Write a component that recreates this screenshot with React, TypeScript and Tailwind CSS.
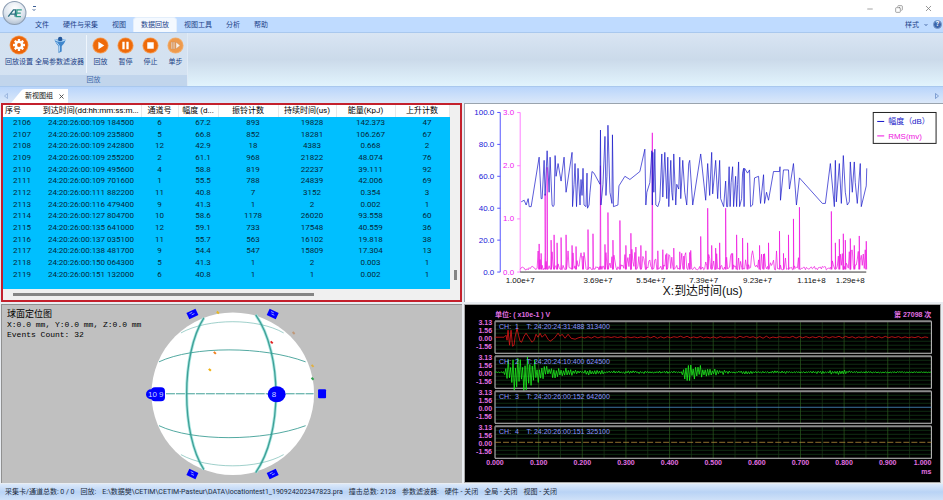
import type { ReactNode } from 'react'
import { ChevronDown, Copy, Minus, X } from 'lucide-react'
import clsx from 'clsx'

const MENU = ['文件', '硬件与采集', '视图', '数据回放', '视图工具', '分析', '帮助']

const COLUMNS = [
  { title: '序号', width: 'w-[38px]' },
  { title: '到达时间(dd:hh:mm:ss:m...', width: 'w-[100px]' },
  { title: '通道号', width: 'w-[37px]' },
  { title: '幅度 (d...', width: 'w-[40px]' },
  { title: '振铃计数', width: 'w-[60px]' },
  { title: '持续时间(us)', width: 'w-[58px]' },
  { title: '能量(KpJ)', width: 'w-[59px]' },
  { title: '上升计数', width: 'w-[54px]' },
]

const HITS = [
  ['2106', '24:20:26:00:109 184500', '6', '67.2', '893', '19828', '142.373', '47'],
  ['2107', '24:20:26:00:109 235800', '5', '66.8', '852', '18281', '106.267', '67'],
  ['2108', '24:20:26:00:109 242800', '12', '42.9', '18', '4383', '0.668', '2'],
  ['2109', '24:20:26:00:109 255200', '2', '61.1', '968', '21822', '48.074', '76'],
  ['2110', '24:20:26:00:109 495600', '4', '58.8', '819', '22237', '39.111', '92'],
  ['2111', '24:20:26:00:109 701600', '1', '55.5', '788', '24839', '42.006', '69'],
  ['2112', '24:20:26:00:111 882200', '11', '40.8', '7', '3152', '0.354', '3'],
  ['2113', '24:20:26:00:116 479400', '9', '41.3', '1', '2', '0.002', '1'],
  ['2114', '24:20:26:00:127 804700', '10', '58.6', '1178', '26020', '93.558', '60'],
  ['2115', '24:20:26:00:135 641000', '12', '59.1', '733', '17548', '40.559', '36'],
  ['2116', '24:20:26:00:137 035100', '11', '55.7', '563', '16102', '19.818', '38'],
  ['2117', '24:20:26:00:138 481700', '9', '54.4', '547', '15809', '17.304', '13'],
  ['2118', '24:20:26:00:150 064300', '5', '41.3', '1', '2', '0.003', '1'],
  ['2119', '24:20:26:00:151 132000', '6', '40.8', '1', '1', '0.002', '1'],
]

// [x, dB]
const AMPLITUDE = [
  [1, 44], [4, 45], [6, 42], [8, 46], [9, 41], [11, 41], [19, 72], [21, 46], [22, 46], [24, 70], [25, 48],
  [27, 76], [29, 50], [30, 72], [32, 42], [33, 41], [34, 42], [35, 73], [36, 60], [38, 68], [41, 57], [44, 72],
  [46, 50], [52, 75], [52.5, 41], [54, 55], [55, 68], [56.5, 41], [58, 65], [60, 42], [61, 58], [62, 48],
  [63, 65], [64, 42], [66, 41], [67, 62], [67.5, 40], [69, 42], [70, 50], [72, 63], [74, 62], [80, 55],
  [80.5, 89], [81, 42], [83, 55], [85, 85], [86, 48], [87, 60], [88, 92], [90, 50], [92, 43], [92.5, 86],
  [93.5, 41], [98, 42], [99, 54], [105, 60], [110, 58], [120, 63], [125, 77], [126, 42], [127, 50], [130, 56],
  [132, 76], [132.5, 42], [133, 75], [134, 50], [135, 77], [136, 42], [138, 41], [140, 45], [142, 74], [143, 47],
  [145, 75], [147, 46], [148, 72], [149, 41], [151, 70], [152, 50], [153, 45], [154, 74], [156, 42], [157, 55],
  [159, 52], [160, 72], [161, 46], [163, 70], [165, 50], [167, 42], [169, 68], [170, 70], [173, 42], [181, 74],
  [186, 45], [188, 68], [190, 48], [192, 75], [193, 49], [196, 70], [198, 46], [200, 70], [201, 46], [204, 41],
  [206, 57], [207, 41], [208, 41], [209.5, 66], [210.5, 41], [211.5, 56], [213, 66], [214, 41], [216, 60],
  [217, 41], [218, 55], [219, 69], [220, 41], [222, 46], [223, 62], [224, 65], [224.5, 41], [225, 65], [228, 62],
  [230, 64], [231, 41], [233, 42], [235, 59], [239, 60], [241, 43], [244, 61], [245, 43], [247, 50], [249, 45],
  [254, 63], [260, 63], [260.5, 66], [261, 45], [264, 64], [269, 64], [270, 52], [274, 68], [277, 42], [280, 59],
  [303, 43], [306, 43], [311, 68], [315, 41], [316, 70], [317, 44], [320, 68], [322, 43], [324, 73], [326, 50],
  [328, 42], [330, 44], [331, 69], [333, 50], [335, 69], [336, 56], [338, 43], [341, 68], [342, 41], [347, 54],
  [347.5, 65],
]

// [x, mv]
const RMS_PEAKS = [
  [19, 0.53], [21, 0.35], [25, 1.47], [27, 1.97], [31, 0.6], [34, 0.7], [37, 0.55], [41, 0.65], [46, 0.7],
  [52, 0.5], [56, 0.48], [63, 0.3], [68, 0.8], [73, 0.72], [80.5, 2], [85, 0.52], [88, 1.12], [93, 0.6],
  [100, 0.97], [106, 0.5], [111, 0.73], [116, 0.47], [121, 0.5], [126, 0.4], [132.5, 2.62], [138, 0.4],
  [143, 0.42], [147, 0.35], [154, 0.45], [160, 0.38], [164, 0.3], [170, 0.37], [181, 0.67], [188, 1.2],
  [192, 0.5], [196, 0.45], [200, 0.55], [206, 1.2], [213, 0.35], [217, 0.7], [223, 0.64], [228, 0.55],
  [240, 0.5], [244, 0.3], [249, 0.55], [260, 0.77], [264, 0.35], [269, 0.7], [274, 1], [280, 1.22],
  [312, 1.14], [316, 0.55], [320, 0.62], [324, 0.72], [326, 0.6], [331, 0.63], [335, 0.5], [340, 0.68],
  [347, 0.58],
]

const CHANNELS = [
  { label: 'CH:  1    T: 24:20:24:31:488 313400', color: '#e01818' },
  { label: 'CH:  2    T: 24:20:24:10:400 624500', color: '#20f020' },
  { label: 'CH:  3    T: 24:20:26:00:152 642600', color: '#4a90c8' },
  { label: 'CH:  4    T: 24:20:26:00:151 325100', color: '#b08c38' },
]

// first burst of channel 1, [x, y] around the zero line
const RED_BURST = [
  [0, 0], [9, 0], [11, -2], [12, 3], [13, -7], [14.5, 8], [16, -7], [17.5, 9], [19, 8], [20, 0], [22, -9], [23.5, -2],
  [25, 4], [26.5, 5], [29, -1], [31, -4], [33, -1], [35, 2], [37, 5], [39, 3], [41, -3], [43, 0], [45, -4], [47, 0],
  [50, -3], [53, 2], [55, 4], [58, 2], [60, 0], [63, -4], [65, -1], [67, -3], [70, 1], [73, -3], [76, 1], [80, 2],
]
const RED_TAIL = [[0, 2], [20, 1], [436, 1]]

// [x, half height]
const GREEN_ENVELOPE = [
  [0, 0.3], [9, 1], [13, 13], [18, 22], [30, 19], [38, 14], [48, 8], [68, 5], [84, 1.5], [95, 3], [110, 1.5],
  [150, 1.4], [186, 1], [190, 9], [202, 9], [210, 4], [224, 3], [238, 1], [252, 1.8], [266, 0.8], [284, 1.8],
  [300, 0.6], [346, 2.4], [360, 1], [388, 0.8], [436, 0.4],
]

function noise(n: number) {
  const v = Math.sin(n * 127.1 + 3.7) * 43758.5453
  return v - Math.floor(v)
}

function toPoints(points: number[][]) {
  return points.map(([x, y]) => `${x.toFixed(1)},${y.toFixed(1)}`).join(' ')
}

function envelopeAt(envelope: number[][], x: number) {
  const i = Math.max(1, envelope.findIndex((p) => p[0] >= x))
  const [x0, y0] = envelope[i - 1]
  const [x1, y1] = envelope[i]
  return y0 + ((y1 - y0) * (x - x0)) / (x1 - x0)
}

function burst(envelope: number[][], start: number, step: number, seed: number) {
  const points: number[][] = []
  let sign = 1
  for (let x = start; x <= 436; x += step) {
    points.push([x, sign * envelopeAt(envelope, x) * (0.2 + 0.8 * noise(x + seed))])
    sign = -sign
  }
  return points
}

function rmsPoints() {
  const base: number[][] = []
  for (let x = 0; x <= 347; x += 1) {
    const quiet = x < 18 || (x > 69 && x < 79) || (x > 173 && x < 186) || (x > 281 && x < 310)
    const level = quiet ? 0.04 + noise(x) * 0.07 : noise(x) > 0.65 ? 0.15 + noise(x + 9) * 0.28 : 0.04 + noise(x + 5) * 0.1
    base.push([x, level])
  }
  for (const [x, v] of RMS_PEAKS) base.push([x - 0.4, 0.05], [x, v], [x + 0.4, 0.05])
  return toPoints(base.sort((a, b) => a[0] - b[0]).map(([x, v]) => [56 + x, 168.5 - v * 53.3]))
}

function LogoOrb() {
  return (
    <svg viewBox="0 0 24 24" className="absolute top-0 left-[2px] h-[25px] w-[25px]">
      <defs>
        <radialGradient id="orb" cx="50%" cy="30%" r="75%">
          <stop offset="0%" stopColor="#ffffff" />
          <stop offset="60%" stopColor="#dde5ee" />
          <stop offset="100%" stopColor="#a9b9cc" />
        </radialGradient>
      </defs>
      <circle cx="12" cy="12.500" r="11" fill="url(#orb)" stroke="#8c9db2" strokeWidth="1" />
      <path d="M6 16 11 9.500h2.200L12.500 16M8.500 13.500h4" fill="none" stroke="#2c6f80" strokeWidth="1.300" />
      <path d="M19 9.500h-4.500L13.700 16h4.500M14.200 12.600h3.800" fill="none" stroke="#2e9a86" strokeWidth="1.200" />
    </svg>
  )
}

function OrangeDisc({ faded, children }: { faded?: boolean; children: ReactNode }) {
  return (
    <svg viewBox="0 0 20 20" className="h-[17px] w-[17px]">
      <circle cx="10" cy="10" r="9.500" fill={faded ? '#f2b173' : '#f3a05c'} />
      <circle cx="10" cy="10" r="8.500" fill={faded ? '#ee9a4c' : '#ee6a0a'} />
      {children}
    </svg>
  )
}

function GearIcon() {
  return (
    <svg viewBox="0 0 20 20" className="h-[20px] w-[20px]">
      <circle cx="10" cy="10" r="9.500" fill="#f3a05c" />
      <circle cx="10" cy="10" r="8.700" fill="#ec650a" />
      {[0, 45, 90, 135].map((a) => (
        <rect key={a} x="8.800" y="4" width="2.400" height="12" rx="0.500" fill="#fff" transform={`rotate(${a} 10 10)`} />
      ))}
      <circle cx="10" cy="10" r="4.300" fill="#fff" />
      <circle cx="10" cy="10" r="1.900" fill="#ec650a" />
    </svg>
  )
}

function FunnelIcon() {
  return (
    <svg viewBox="0 0 16 18" className="h-[18px] w-[16px]">
      <path d="M2.500 3.500C3.500 7.500 6 9 6.500 10.500v6.500l3.200-1.500v-5C10 9 12.700 8 13.700 3.500z" fill="#3f86cc" />
      <path d="M4.500 6 7.500 10v5.500" fill="none" stroke="#a9d2f5" strokeWidth="1" />
      <path d="M2.500 3.500Q8 7 13.700 3.500" fill="none" stroke="#b8dcf8" strokeWidth="1.200" />
      <circle cx="8.200" cy="3" r="2.200" fill="#24589c" />
    </svg>
  )
}

function RibbonButton({ label, icon }: { label: string; icon: ReactNode }) {
  return (
    <button className="flex shrink-0 flex-col items-center whitespace-nowrap text-[#1b3f86]">
      <span className="flex h-5 items-center">{icon}</span>
      <span className="mt-[2px] leading-[10px]">{label}</span>
    </button>
  )
}

function TitleBar() {
  return (
    <header className="flex h-[17px] shrink-0 items-center justify-between bg-white pl-[32px] pr-[10px]">
      <button aria-label="快速访问" className="flex flex-col items-center gap-px">
        <span className="h-px w-[3px] bg-[#3b5e95]" />
        <ChevronDown className="h-1 w-1 text-[#3b5e95]" strokeWidth={6} />
      </button>
      <div className="flex items-center gap-[21px] text-[#777]">
        <button aria-label="最小化"><Minus className="h-2 w-2" strokeWidth={2} /></button>
        <button aria-label="还原"><Copy className="h-2 w-2 -scale-x-100" strokeWidth={2} /></button>
        <button aria-label="关闭"><X className="h-[9px] w-[9px]" strokeWidth={2} /></button>
      </div>
    </header>
  )
}

function MenuBar() {
  return (
    <nav className="flex h-[15px] shrink-0 items-stretch justify-between bg-[#bfdbff] pl-[28px] pr-px text-[#1d4389]">
      <div className="flex">
        {MENU.map((item) => (
          <button
            key={item}
            className={clsx('px-[7px]', item === '数据回放' && 'rounded-t-sm border border-b-0 border-[#e3eefb] bg-[#f4f9ff] px-[6px]')}
          >
            {item}
          </button>
        ))}
      </div>
      <div className="flex items-center gap-[5px]">
        <button className="flex items-center gap-[5px]">
          样式
          <ChevronDown className="h-1 w-1" strokeWidth={5} />
        </button>
        <button aria-label="关于" className="h-[9px] w-[9px] rounded-full border border-[#7f9cc8] bg-[#3b66ad] text-center leading-[7px] font-bold text-white">
          ?
        </button>
      </div>
    </nav>
  )
}

function Ribbon() {
  return (
    <section className="h-[55px] shrink-0 border-y border-[#a9c8ee] bg-linear-to-b from-[#d9e5f3] via-[#cbdaea] to-[#e2f4fd]">
      <div className="flex h-full w-[188px] flex-col border-r border-[#dfeaf6] bg-linear-to-b from-[#d5e2f0] to-[#d3e2f2]">
        <div className="flex flex-1 items-start pt-[2px] pl-[5px]">
          <div className="flex gap-[2px] pr-[2px]">
            <RibbonButton label="回放设置" icon={<GearIcon />} />
            <RibbonButton label="全局参数滤波器" icon={<FunnelIcon />} />
          </div>
          <div className="flex h-[38px] gap-[8px] border-l border-[#eef5fc] pl-[5px]">
            <RibbonButton label="回放" icon={<OrangeDisc><path d="M7.500 5.500v9l7-4.500z" fill="#fff" /></OrangeDisc>} />
            <RibbonButton label="暂停" icon={<OrangeDisc><path d="M6.300 5.500h2.700v9H6.300zM11 5.500h2.700v9H11z" fill="#fff" /></OrangeDisc>} />
            <RibbonButton label="停止" icon={<OrangeDisc><path d="M6.200 6.200h7.600v7.600H6.200z" fill="#fff" /></OrangeDisc>} />
            <RibbonButton
              label="单步"
              icon={
                <OrangeDisc faded>
                  <path d="M5 6h1.500v8H5zM7.500 6H9v8H7.500zM10.500 6v8l5-4z" fill="#fdf0e2" stroke="#b9825a" strokeWidth="0.500" />
                </OrangeDisc>
              }
            />
          </div>
        </div>
        <div className="h-[11px] bg-[#c1d5ec] text-center leading-[11px] text-[#4068a8]">回放</div>
      </div>
    </section>
  )
}

function DocumentTabs() {
  return (
    <div className="flex h-[16px] shrink-0 items-end justify-between bg-linear-to-b from-[#b9d5fb] to-[#dbe8f9] px-[4px]">
      <div className="flex items-end">
        <button aria-label="上一个" className="pb-[4px]">
          <svg viewBox="0 0 4 6" className="h-[6px] w-1"><path d="M3.500.5v5L.5 3z" fill="none" stroke="#8aa8d4" strokeWidth="0.700" /></svg>
        </button>
        <svg viewBox="0 0 14 14" className="ml-[3px] h-[14px] w-[14px]"><path d="M0 14 10 2Q11 0 14 0V14z" fill="#fff" /></svg>
        <div className="flex h-[14px] items-center gap-[5px] bg-white pr-[3px] text-[#111]">
          新视图组
          <button aria-label="关闭标签"><X className="h-[7px] w-[7px] text-[#444]" strokeWidth={3} /></button>
        </div>
      </div>
      <button aria-label="下一个" className="pb-[4px]">
        <svg viewBox="0 0 4 6" className="h-[6px] w-1"><path d="M.5.500v5l3-2.500z" fill="none" stroke="#5f84c0" strokeWidth="0.700" /></svg>
      </button>
    </div>
  )
}

function HitTable() {
  return (
    <section className="grid min-h-0 min-w-0 grid-cols-[1fr_11px] grid-rows-[1fr_11px] border-2 border-[#c4202c] bg-[#f0f0f0] text-[8px] leading-[10px] text-black">
      <div className="min-h-0 bg-[#00bfff] pb-[9px]">
        <table className="h-full w-full table-fixed border-collapse">
          <thead>
            <tr className="h-[12px] bg-white">
              {COLUMNS.map((c, i) => (
                <th
                  key={c.title}
                  className={clsx(c.width, 'p-0 font-normal whitespace-nowrap', i === 0 ? 'pl-[2px] text-left' : 'border-r border-[#e8e8e8]')}
                >
                  {c.title}
                </th>
              ))}
            </tr>
          </thead>
          <tbody className="text-[#06283a]">
            {HITS.map((row) => (
              <tr key={row[0]}>
                {row.map((cell, i) => (
                  <td key={i} className={clsx('p-0 text-center whitespace-nowrap', i > 2 && 'pl-[10px]')}>
                    {cell}
                  </td>
                ))}
              </tr>
            ))}
          </tbody>
        </table>
      </div>
      <div className="flex flex-col items-center justify-end pb-[9px]">
        <div className="h-[10px] w-[3px] bg-[#858585]" />
      </div>
      <div className="flex items-center pl-[10px]">
        <div className="h-[3px] w-[69%] bg-[#858585]" />
      </div>
    </section>
  )
}

function TrendChart() {
  const ticks = [0, 1, 2, 3, 4, 5]
  const xLabels: [string, number][] = [
    ['1.00e+7', 56], ['3.69e+7', 134], ['5.54e+7', 187], ['7.39e+7', 240], ['9.23e+7', 294], ['1.11e+8', 348], ['1.29e+8', 387],
  ]
  return (
    <section className="min-h-0 min-w-0 border-t border-l border-[#9aa4ae] bg-white">
      <svg viewBox="1 0 479 199" className="h-full w-full font-['Liberation_Sans','Noto_Sans_CJK_SC',sans-serif] text-[8px]">
        <g stroke="#5555ff" fill="#2020d8">
          <path d="M36 8.500V168.500" />
          {ticks.map((t) => (
            <g key={t}>
              <path d={`M33 ${168.5 - t * 32}h3`} />
              <text x="30" y={171 - t * 32} textAnchor="end" stroke="none">{(t * 20).toFixed(1)}</text>
            </g>
          ))}
        </g>
        <g stroke="#ff80ff" fill="#f020f0">
          <path d="M56 8.500V168.500" />
          {[0, 1, 2, 3].map((t) => (
            <g key={t}>
              <path d={`M53 ${168.5 - t * 53.3}h3`} />
              <text x="50" y={171 - t * 53.3} textAnchor="end" stroke="none">{t.toFixed(1)}</text>
            </g>
          ))}
        </g>
        <polyline points={rmsPoints()} fill="none" stroke="#ee10e0" strokeWidth="0.700" />
        <polyline
          points={toPoints(AMPLITUDE.map(([x, db]) => [56 + x, 168.5 - db * 1.6]))}
          fill="none"
          stroke="#1414c8"
          strokeWidth="0.700"
        />
        <path d="M56 168.500H403" stroke="#333" />
        {xLabels.map(([label, x]) => (
          <text key={label} x={x} y="179" textAnchor="middle" fill="#111">{label}</text>
        ))}
        <text x="239" y="192" textAnchor="middle" fill="#111" className="text-[12px]">X:到达时间(us)</text>
        <rect x="410" y="8.500" width="63" height="31" fill="#fff" stroke="#222" />
        <path d="M414 17.500h7" stroke="#1414c8" />
        <path d="M414 32h7" stroke="#ee10e0" />
        <text x="425" y="20" fill="#1414c8">幅度（dB）</text>
        <text x="425" y="35" fill="#ee10e0">RMS(mv)</text>
      </svg>
    </section>
  )
}

function SphereView() {
  const sensors = [[-40.5, -80, -25], [40, -80, 25], [40, 80.5, -25], [-40.5, 80.5, 25]]
  const events: [number, number, string][] = [
    [-18, -41, '#f08020'], [-23, -24, '#f0b010'], [39, -51.5, '#e02020'], [80, -28, '#e0b040'],
    [80, -15, '#30a050'], [-15, -81.5, '#e8b820'], [61, -61, '#c09878'],
  ]
  return (
    <section className="relative min-h-0 min-w-0 border-t border-l border-[#909090] bg-[#c0c0c0] text-black">
      <svg viewBox="-230 -89 458 178" className="absolute inset-0 h-full w-full">
        <circle r="81.500" fill="#fff" />
        <g fill="none" stroke="#3f9f96">
          <path d="M-29-76C-52-40-52 40-29 76" stroke="#a6e6e0" strokeWidth="3" />
          <path d="M23-79C50-40 50 40 23 79" stroke="#a6e6e0" strokeWidth="3" />
          <path d="M-29-76C-52-40-52 40-29 76M23-79C50-40 50 40 23 79" strokeWidth="1.300" />
          <path d="M-74-32C-40-48 30-48 73-32M-74 32C-40 48 30 48 73 32" strokeWidth="0.900" />
          <path d="M-52-61C-25-76 25-76 51-61M-52 61C-25 76 25 76 51 61" strokeWidth="0.500" />
          <path d="M-67 0H81" strokeDasharray="9 1" />
        </g>
        {events.map(([x, y, color]) => (
          <path key={color} d={`M${x - 1} ${y - 1}l2 2`} stroke={color} strokeWidth="2" />
        ))}
        <g fill="#0000ff">
          {sensors.map(([x, y, angle]) => (
            <g key={`${x}${y}`} transform={`translate(${x} ${y}) rotate(${angle})`}>
              <rect x="-5" y="-3.500" width="10" height="7" />
              <path d="M-2.500-1.500h3M-1 0.500h3" stroke="#b8c8ff" strokeWidth="0.700" />
            </g>
          ))}
          <rect x="85.500" y="-4.500" width="8" height="9" rx="1" />
          <circle cx="-82" cy="0.500" r="5" />
          <rect x="-82" y="-6.500" width="14" height="14" rx="4" />
          <ellipse cx="44" cy="0.500" rx="9" ry="8" />
        </g>
        <g fill="#c8d4ff" className="font-['Liberation_Sans',sans-serif] text-[8px]">
          <text x="-85" y="3.500">10 9</text>
          <text x="39" y="3.500">8</text>
        </g>
      </svg>
      <div className="relative px-[5px] pt-[5px] font-['Liberation_Mono','Noto_Sans_CJK_SC',monospace] text-[8px] leading-[10px]">
        <p className="text-[9px]">球面定位图</p>
        <p>X:0.0 mm, Y:0.0 mm, Z:0.0 mm</p>
        <p>Events Count: 32</p>
      </div>
    </section>
  )
}

function Waveform({ index }: { index: number }) {
  const { label, color } = CHANNELS[index]
  return (
    <g transform={`translate(31 ${17 + index * 35})`}>
      <g stroke="#16401a" strokeWidth="0.700">
        {[4, 8, 12, 20, 24, 28].map((y) => <path key={y} d={`M0 ${y}H436`} />)}
        {Array.from({ length: 19 }, (_, i) => (
          <path key={i} d={`M${(i + 1) * 21.8} 0V32`} stroke={i % 2 ? '#2c5a20' : '#1b3a18'} />
        ))}
      </g>
      <path d="M0 32V0" stroke="#c8c8c8" />
      <path d="M0 0H436" stroke="#8a8a8a" strokeWidth="2" />
      <path d="M436 0V32H0" fill="none" stroke="#c8c8c8" />
      <g fill="#e070e0" textAnchor="end" className="font-bold">
        <text x="-3" y="4">3.13</text>
        <text x="-3" y="12">1.56</text>
        <text x="-3" y="20">0.00</text>
        <text x="-3" y="28">-1.56</text>
      </g>
      <g transform="translate(0 16)" fill="none" stroke={color} strokeWidth="0.800">
        {index === 0 && <polyline points={toPoints([...RED_BURST, ...burst(RED_TAIL, 83, 3.3, 2)])} />}
        {index === 1 && <polyline points={toPoints(burst(GREEN_ENVELOPE, 0, 1.2, 5))} />}
        {index === 2 && <path d="M0 0H436" />}
        {index === 3 && <path d="M0 0H436" strokeDasharray="6 2" />}
      </g>
      <text x="4" y="7.500" fill="#8c96ff" className="whitespace-pre">{label}</text>
    </g>
  )
}

function WaveformView() {
  return (
    <section className="mr-[2px] min-h-0 min-w-0 border border-[#a8a8a8] bg-black">
      <svg viewBox="1 1 475 176" className="h-full w-full font-['Liberation_Sans','Noto_Sans_CJK_SC',sans-serif] text-[7px]">
        {CHANNELS.map((c, i) => <Waveform key={c.label} index={i} />)}
        <g fill="#e070e0" className="font-bold">
          <text x="31" y="13">单位: ( x10e-1 ) V</text>
          <text x="467" y="13" textAnchor="end">第 27098 次</text>
          {Array.from({ length: 10 }, (_, i) => (
            <text key={i} x={31 + i * 43.6} y="161" textAnchor="middle">{(i / 10).toFixed(3)}</text>
          ))}
          <text x="467" y="161" textAnchor="end">1.000</text>
          <text x="467" y="170" textAnchor="end">ms</text>
        </g>
      </svg>
    </section>
  )
}

function StatusBar() {
  return (
    <footer className="flex h-[16px] shrink-0 items-center gap-[6px] bg-linear-to-b from-[#dce9fa] via-[#b9d3f5] to-[#cfe1f8] px-[5px] whitespace-nowrap text-[#222c40]">
      <span>采集卡/通道总数: 0 / 0</span>
      <span>回放:</span>
      <span>E:\数据樊\CETIM\CETIM-Pasteur\DATA\locationtest1_190924202347823.pra</span>
      <span>撞击总数: 2128</span>
      <span>参数滤波器:</span>
      <span>硬件 - 关闭</span>
      <span>全局 - 关闭</span>
      <span>视图 - 关闭</span>
    </footer>
  )
}

export default function App() {
  return (
    <div className="relative flex h-screen flex-col overflow-hidden bg-[#e9edf2] font-['Roboto','Noto_Sans_CJK_SC',sans-serif] text-[7px] leading-[10px]">
      <TitleBar />
      <MenuBar />
      <LogoOrb />
      <Ribbon />
      <DocumentTabs />
      <main className="grid min-h-0 flex-1 grid-cols-[49fr_51fr] grid-rows-[200fr_179fr] gap-[2px] pb-px pl-px">
        <HitTable />
        <TrendChart />
        <SphereView />
        <WaveformView />
      </main>
      <StatusBar />
    </div>
  )
}
